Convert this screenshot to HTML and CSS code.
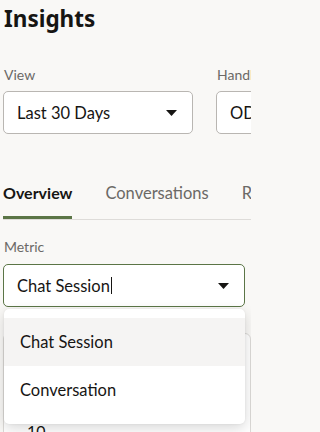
FILE: index.html
```html
<!DOCTYPE html>
<html lang="en">
<head>
<meta charset="utf-8">
<title>Insights</title>
<link rel="stylesheet" href="styles.css">
</head>
<body>
<div class="page">
  <h1 class="title">Insights</h1>

  <div class="filters">
    <div class="field">
      <div class="field-label">View</div>
      <div class="select">
        <span class="value">Last 30 Days</span>
        <svg class="caret" width="11" height="6" viewBox="0 0 11 6"><path d="M0 0H11L5.5 6Z" fill="#161513"/></svg>
      </div>
    </div>
    <div class="field">
      <div class="field-label">Handler</div>
      <div class="select">
        <span class="value">ODA Handler</span>
        <svg class="caret" width="11" height="6" viewBox="0 0 11 6"><path d="M0 0H11L5.5 6Z" fill="#161513"/></svg>
      </div>
    </div>
  </div>

  <nav class="tabs">
    <div class="tab active">Overview</div>
    <div class="tab">Conversations</div>
    <div class="tab">Retrainer</div>
  </nav>

  <div class="field metric">
    <div class="field-label">Metric</div>
    <div class="select focused">
      <span class="value">Chat Session<span class="cursor"></span></span>
      <svg class="caret" width="11" height="6" viewBox="0 0 11 6"><path d="M0 0H11L5.5 6Z" fill="#161513"/></svg>
    </div>
    <ul class="dropdown">
      <li class="option highlighted">Chat Session</li>
      <li class="option">Conversation</li>
    </ul>
  </div>

  <div class="card">
    <div class="axis-value">10</div>
  </div>
</div>
</body>
</html>
```

FILE: styles.css
```css
html, body {
  margin: 0;
  padding: 0;
  overflow: hidden;
}

body {
  width: 251px;
  height: 432px;
  background: #f9f8f6;
  font-family: Lato, "Noto Sans", sans-serif;
  color: #161513;
}

.page {
  box-sizing: border-box;
  width: 251px;
  height: 432px;
  overflow: hidden;
  padding-left: 3px;
}

.title {
  margin: 5px 0 0 1px;
  font-family: "Noto Sans", Lato, sans-serif;
  font-size: 22.5px;
  font-weight: 700;
  line-height: 28px;
}

.filters {
  display: flex;
  gap: 23px;
  margin-top: 34px;
}

.field {
  display: flex;
  flex-direction: column;
  flex: none;
}

.field-label {
  font-size: 14px;
  line-height: 16px;
  color: #6b6966;
  padding-left: 1px;
  margin-bottom: 8px;
}

.select {
  box-sizing: border-box;
  width: 190px;
  height: 43px;
  display: flex;
  align-items: center;
  justify-content: space-between;
  padding: 0 15px 0 13px;
  background: #fff;
  border: 1px solid #b9b6b2;
  border-radius: 5px;
  font-size: 16.5px;
  white-space: nowrap;
}

.value {
  display: flex;
  align-items: center;
}

.cursor {
  display: inline-block;
  width: 1px;
  height: 17px;
  background: #161513;
  margin-left: 1px;
}

.caret {
  flex: none;
}

.tabs {
  display: flex;
  gap: 33px;
  margin-top: 49px;
  border-bottom: 1px solid #dedcd9;
  white-space: nowrap;
}

.tab {
  font-size: 16.5px;
  line-height: 20px;
  padding-bottom: 13px;
  border-bottom: 3px solid transparent;
  color: #6b6966;
}

.tab.active {
  font-size: 16px;
  color: #161513;
  font-weight: 700;
  border-bottom-color: #5b7546;
}

.metric {
  position: relative;
  margin-top: 19px;
}

.metric .field-label {
  margin-bottom: 9px;
}

.metric .select {
  width: 242px;
}

.select.focused {
  border-color: #5b7546;
}

.dropdown {
  position: absolute;
  top: calc(100% + 2px);
  left: 1px;
  width: 241px;
  margin: 0;
  padding: 9px 0 10px;
  list-style: none;
  background: #fff;
  border-radius: 5px;
  box-shadow: 0 4px 14px rgba(0, 0, 0, 0.16), 0 0 2px rgba(0, 0, 0, 0.08);
  z-index: 2;
}

.option {
  height: 48px;
  display: flex;
  align-items: center;
  padding-left: 16px;
  font-size: 16.5px;
}

.option.highlighted {
  background: #f5f4f3;
}

.card {
  margin-top: 26px;
  height: 200px;
  background: #fff;
  border: 1px solid #dcdad7;
  border-radius: 6px;
  padding: 87px 0 0 23px;
}

.axis-value {
  font-size: 16px;
  line-height: 20px;
}
```
